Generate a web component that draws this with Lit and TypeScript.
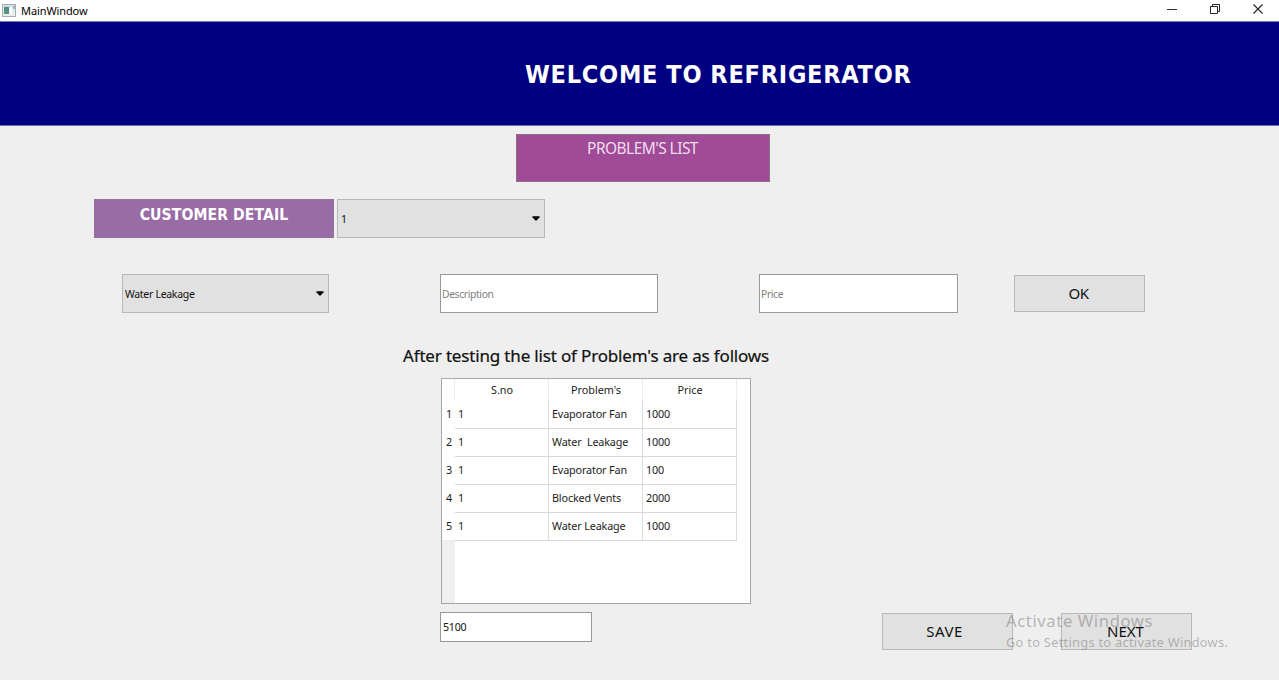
import { LitElement, html, css } from "lit";
import { customElement, property } from "lit/decorators.js";

@customElement("combo-box")
class ComboBox extends LitElement {
  @property() value = "";
  static styles = css`
    :host { box-sizing: border-box; display: flex; align-items: center; justify-content: space-between;
      background: #e1e1e1; border: 1px solid #b8b8b8; padding: 0 4px 0 3px; height: 39px; width: 208px; color: #111; }
    .text { white-space: pre; line-height: 16px; font-size: 10.5px; letter-spacing: -0.3px; padding-top: 1px; }
    svg { display: block; margin-top: -1px; }
  `;
  render() {
    return html`<span class="text">${this.value}</span>
      <svg width="8" height="5" viewBox="0 0 8 5"><path d="M0.5 0.3H7.5V1.2L4.6 4.4H3.4L0.5 1.2Z" fill="#000" /></svg>`;
  }
}

@customElement("problem-table")
class ProblemTable extends LitElement {
  @property({ attribute: false }) rows: string[][] = [];
  static styles = css`
    :host { box-sizing: border-box; display: flex; flex-direction: column; width: 310px; height: 226px;
      border: 1px solid #a3a5a9; border-top-color: #a8abb0; background: #fff; color: #1c1c1c; font-size: 10.8px; letter-spacing: -0.15px; }
    .row { display: grid; grid-template-columns: 13px 94px 94px 94px; flex: none; height: 28px; line-height: 28px; }
    .row > * { box-sizing: border-box; white-space: pre; }
    .head { height: 21px; line-height: 22px; text-align: center; letter-spacing: 0; }
    .head > * { border-right: 1px solid #ececec; padding-left: 1px; }
    .num { padding-left: 4px; }
    .cell { border-right: 1px solid #dcdcdc; border-bottom: 1px solid #d8d8d8; padding-left: 3px; }
    .rest { width: 13px; flex: 1; background: #efefef; }
  `;
  render() {
    return html`<div class="row head"><span></span><span>S.no</span><span>Problem's</span><span>Price</span></div>
      ${this.rows.map((r, i) => html`<div class="row"><span class="num">${i + 1}</span>${r.map((c) => html`<span class="cell">${c}</span>`)}</div>`)}
      <div class="rest"></div>`;
  }
}

@customElement("app-root")
class AppRoot extends LitElement {
  static styles = css`
    :host { display: block; position: relative; width: 1279px; height: 680px; overflow: hidden; background: #efefef;
      font: 11px/16px "Noto Sans", "Open Sans", sans-serif; color: #111; }
    * { box-sizing: border-box; }
    .bar { height: 21px; background: #fff; display: flex; align-items: center; padding: 0 15px 0 2px; }
    .bar svg { display: block; }
    .bar > svg { margin-top: -1px; }
    .name { margin-left: 5px; flex: 1; font-size: 11px; letter-spacing: -0.1px; padding-top: 1px; color: #000; }
    .controls { display: flex; gap: 31px; align-items: center; margin-top: -3px; }
    .banner { height: 105px; background: #000080; border-top: 1px solid #7a7ab8; border-bottom: 1px solid #6c6cb4;
      color: #fff; font-family: "DejaVu Sans Condensed", "DejaVu Sans", sans-serif; font-stretch: condensed;
      font-weight: 700; font-size: 25px; line-height: 34px; padding: 36px 0 0 525px; white-space: nowrap; letter-spacing: 0.76px; word-spacing: -0.5px; }
    .problem { margin: 8px 0 0 516px; width: 254px; height: 48px; background: #9f4b96; border: 1px solid #8c7189;
      color: #f1dcef; text-align: center; font-size: 15.5px; line-height: 26px; letter-spacing: -0.55px; padding-right: 1px; }
    .customer { display: flex; gap: 3px; margin: 17px 0 0 94px; }
    .label { width: 240px; height: 39px; background: #9a6ca6; border: 1px solid #917399; color: #fff; font-weight: 700;
      font-family: "DejaVu Sans Condensed", "DejaVu Sans", sans-serif; font-stretch: condensed;
      font-size: 15.6px; line-height: 30px; text-align: center; letter-spacing: 0.1px; }
    .form { display: flex; margin: 36px 0 0 122px; align-items: center; }
    .form combo-box { width: 207px; padding-left: 2px; }
    .field { height: 39px; background: #fff; border: 1px solid #999; padding-left: 1px; line-height: 38px; color: #808080; font-size: 10.3px; letter-spacing: -0.35px; }
    .desc { width: 218px; margin-left: 111px; }
    .price { width: 199px; margin-left: 101px; }
    .btn { width: 131px; height: 37px; background: #e1e1e1; border: 1px solid #b8b8b8; text-align: center;
      line-height: 35px; font-size: 15px; color: #111; }
    .ok { margin-left: 56px; letter-spacing: -0.5px; padding-right: 2px; }
    .caption { margin: 31px 0 0 403px; font-size: 17px; line-height: 24px; color: #111; white-space: nowrap; letter-spacing: -0.165px; -webkit-text-stroke: 0.2px #111; }
    .table { margin: 10px 0 0 441px; }
    .foot { display: flex; margin: 8px 0 0 440px; }
    .total { width: 152px; height: 30px; background: #fff; border: 1px solid #999; line-height: 28px; padding-left: 2px; font-size: 10.6px; letter-spacing: -0.2px; }
    .save { margin: 1px 48px 0 290px; padding-right: 6px; letter-spacing: 0.5px; }
    .next { margin-top: 1px; padding-right: 2px; }
    .mark { position: absolute; left: 1006px; top: 610px; color: rgba(120, 120, 120, 0.5); white-space: nowrap; }
    .m1 { font-size: 16.6px; line-height: 21px; letter-spacing: 0.62px; }
    .m2 { font-size: 12.8px; line-height: 22px; letter-spacing: 0.29px; }
  `;
  rows = [
    ["1", "Evaporator Fan", "1000"],
    ["1", "Water  Leakage", "1000"],
    ["1", "Evaporator Fan", "100"],
    ["1", "Blocked Vents", "2000"],
    ["1", "Water Leakage", "1000"],
  ];
  render() {
    return html`
      <div class="bar">
        <svg width="14" height="13" viewBox="0 0 14 13">
          <defs><linearGradient id="g" x2="0" y2="1"><stop stop-color="#4b8796" /><stop offset="1" stop-color="#5f9c7c" /></linearGradient></defs>
          <rect x=".5" y=".5" width="13" height="12" fill="#e8eeee" stroke="#a5aeb5" />
          <rect x="1" y="1" width="12" height="2" fill="#d3dbe1" />
          <rect x="2" y="3" width="5" height="7" fill="url(#g)" />
          <rect x="8" y="4" width="2" height="6" fill="#fff" /><rect x="11" y="2" width="2" height="3" fill="#9db4c4" />
        </svg>
        <span class="name">MainWindow</span>
        <div class="controls">
          <svg width="12" height="12" viewBox="0 0 12 12"><path d="M1 6.5H11" stroke="#333" /></svg>
          <svg width="12" height="12" viewBox="0 0 12 12" fill="none" stroke="#222"><path d="M1.5 3.5H8.5V10.5H1.5ZM3.5 3.5V1.5H10.5V8.5H8.5" /></svg>
          <svg width="12" height="12" viewBox="0 0 12 12"><path d="M1.5 1.5L10.5 10.5M10.5 1.5L1.5 10.5" stroke="#222" stroke-width="1.1" /></svg>
        </div>
      </div>
      <div class="banner">WELCOME TO REFRIGERATOR</div>
      <div class="problem">PROBLEM'S LIST</div>
      <div class="customer"><div class="label"><span>CUSTOMER DETAIL</span></div><combo-box value="1"></combo-box></div>
      <div class="form">
        <combo-box value="Water Leakage"></combo-box>
        <div class="field desc">Description</div>
        <div class="field price">Price</div>
        <div class="btn ok">OK</div>
      </div>
      <div class="caption">After testing the list of Problem's are as follows</div>
      <problem-table class="table" .rows=${this.rows}></problem-table>
      <div class="foot">
        <div class="total">5100</div>
        <div class="btn save">SAVE</div>
        <div class="btn next">NEXT</div>
      </div>
      <div class="mark"><div class="m1">Activate Windows</div><div class="m2">Go to Settings to activate Windows.</div></div>
    `;
  }
}
